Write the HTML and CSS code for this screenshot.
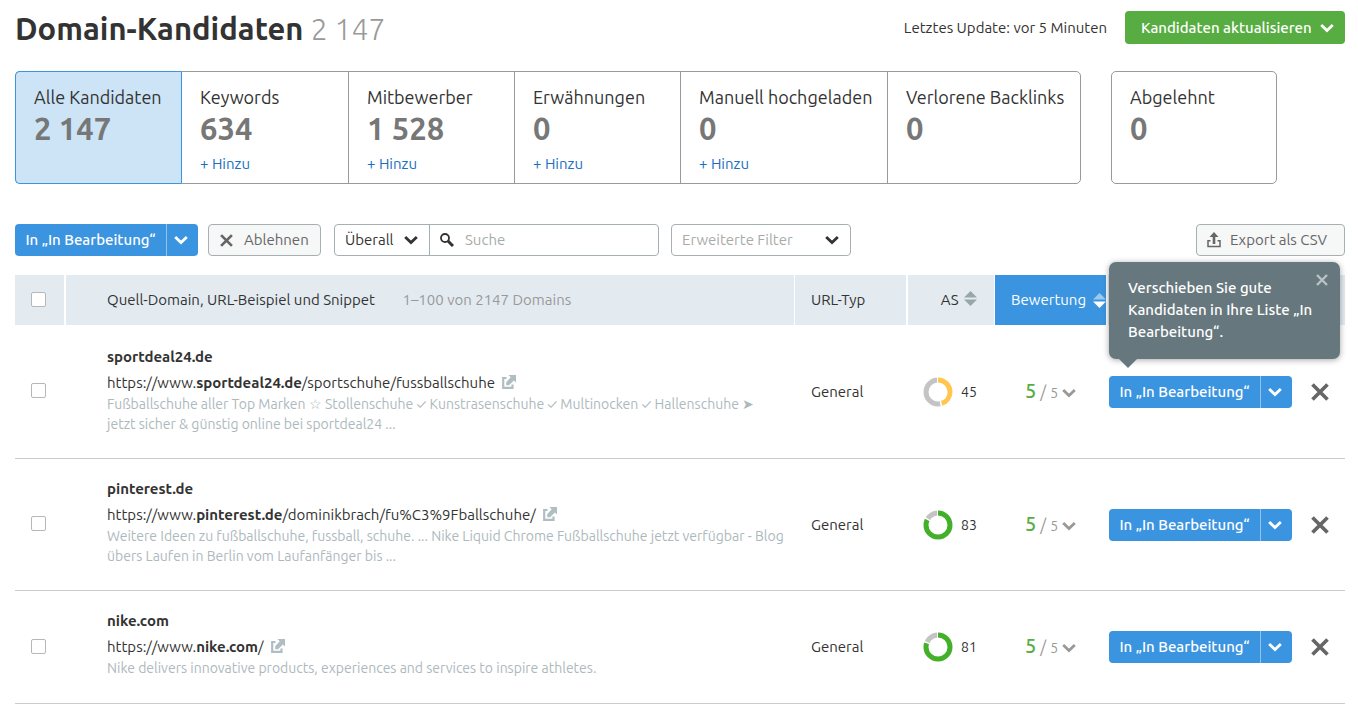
FILE: index.html
```html
<!DOCTYPE html>
<html lang="de">
<head>
<meta charset="utf-8">
<title>Domain-Kandidaten</title>
<meta name="viewport" content="width=device-width, initial-scale=1">
<link rel="stylesheet" href="styles.css">
</head>
<body>
<svg class="sprite" aria-hidden="true">
  <symbol id="chevron" viewBox="0 0 14 10"><path d="M1.200 2 7 7.600 12.800 2" fill="none" stroke="currentColor" stroke-width="2.800"/></symbol>
  <symbol id="cross" viewBox="0 0 18 18"><path d="M1.500 1.500 16.500 16.500M16.500 1.500 1.500 16.500" fill="none" stroke="currentColor" stroke-width="3.700"/></symbol>
  <symbol id="search" viewBox="0 0 14 14"><circle cx="5" cy="5" r="4" fill="none" stroke="currentColor" stroke-width="1.800"/><path d="M8 8 13 13" fill="none" stroke="currentColor" stroke-width="3"/></symbol>
  <symbol id="export" viewBox="0 0 14 16"><path d="M3.500 8.700H1V14.500H13V8.700H10.500" fill="none" stroke="currentColor" stroke-width="1.500"/><path d="M7 0 11.500 5H8.300V12H5.700V5H2.500Z" fill="currentColor"/></symbol>
  <symbol id="external" viewBox="0 0 14 14"><path d="M4.500 3H1.200V12.800H10.500V9.500" fill="none" stroke="currentColor" stroke-width="2.200"/><path d="M6.500 0H14V7.500L11.900 5.400 7 10.300H4.200V7.200L8.700 2.300Z" fill="currentColor"/></symbol>
</svg>

<header class="page-head">
  <h1 class="title">Domain-Kandidaten <span class="title-count">2 147</span></h1>
  <span class="updated">Letztes Update: vor 5 Minuten</span>
  <button class="btn btn-green" type="button">Kandidaten aktualisieren <svg class="chevron"><use href="#chevron"/></svg></button>
</header>

<nav class="cards">
  <div class="card-group">
    <div class="card card-active"><span class="card-label">Alle Kandidaten</span><span class="card-value">2 147</span></div>
    <div class="card"><span class="card-label">Keywords</span><span class="card-value">634</span><a class="card-link" href="#">+ Hinzu</a></div>
    <div class="card"><span class="card-label">Mitbewerber</span><span class="card-value">1 528</span><a class="card-link" href="#">+ Hinzu</a></div>
    <div class="card"><span class="card-label">Erwähnungen</span><span class="card-value">0</span><a class="card-link" href="#">+ Hinzu</a></div>
    <div class="card"><span class="card-label">Manuell hochgeladen</span><span class="card-value">0</span><a class="card-link" href="#">+ Hinzu</a></div>
    <div class="card"><span class="card-label">Verlorene Backlinks</span><span class="card-value">0</span></div>
  </div>
  <div class="card card-single"><span class="card-label">Abgelehnt</span><span class="card-value">0</span></div>
</nav>

<div class="toolbar">
  <div class="split">
    <button class="btn btn-blue split-main" type="button">In „In Bearbeitung“</button>
    <button class="btn btn-blue split-more" type="button" aria-label="Weitere Optionen"><svg class="chevron"><use href="#chevron"/></svg></button>
  </div>
  <button class="btn btn-plain btn-reject" type="button"><svg class="cross-small"><use href="#cross"/></svg>Ablehnen</button>
  <div class="search">
    <label class="scope"><select class="scope-select" aria-label="Suchbereich"><option>Überall</option></select><svg class="chevron"><use href="#chevron"/></svg></label>
    <label class="search-box"><svg class="icon-search"><use href="#search"/></svg><input class="search-input" type="text" placeholder="Suche" aria-label="Suche"></label>
  </div>
  <button class="btn btn-filter" type="button"><span>Erweiterte Filter</span><svg class="chevron"><use href="#chevron"/></svg></button>
  <button class="btn btn-plain btn-export" type="button"><svg class="icon-export"><use href="#export"/></svg>Export als CSV</button>
</div>

<table class="domains">
  <colgroup><col class="col-check"><col><col class="col-type"><col class="col-score"><col class="col-rating"><col class="col-action"></colgroup>
  <thead>
    <tr>
      <th class="cell-check"><input class="check" type="checkbox" aria-label="Alle auswählen"></th>
      <th class="cell-source">Quell-Domain, URL-Beispiel und Snippet <span class="range">1–100 von 2147 Domains</span></th>
      <th class="cell-type">URL-Typ</th>
      <th class="cell-as">AS <svg class="sort" viewBox="0 0 13 15"><path d="M6.500 0 13 6.500H0ZM0 8.500H13L6.500 15Z" fill="#97a6a9"/></svg></th>
      <th class="cell-sorted"><span class="sorted-row"><span class="sorted-text">Bewertung</span><svg class="sort" viewBox="0 0 13 15"><path d="M6.500 0 13 6.500H0Z" fill="#9ccaee"/><path d="M0 8.500H13L6.500 15Z" fill="#fff"/></svg></span></th>
      <th></th>
    </tr>
  </thead>
  <tbody>
    <tr>
      <td class="cell-check"><input class="check" type="checkbox" aria-label="sportdeal24.de auswählen"></td>
      <td class="cell-source">
        <div class="domain">sportdeal24.de</div>
        <a class="url" href="#">https://www.<b>sportdeal24.de</b>/sportschuhe/fussballschuhe<svg class="external"><use href="#external"/></svg></a>
        <p class="snippet">Fußballschuhe aller Top Marken ☆ Stollenschuhe ✓ Kunstrasenschuhe ✓ Multinocken ✓ Hallenschuhe ➤<br>jetzt sicher &amp; günstig online bei sportdeal24 ...</p>
      </td>
      <td class="cell-type">General</td>
      <td><div class="score"><svg class="ring" viewBox="0 0 30 30"><circle class="ring-base" cx="15" cy="15" r="12" pathLength="100"/><circle class="ring-gap" cx="15" cy="15" r="12" pathLength="100" stroke-dasharray="47 53"/><circle class="ring-yellow" cx="15" cy="15" r="12" pathLength="100" stroke-dasharray="45 55"/><path class="ring-start" d="M23 14.500H30"/></svg>45</div></td>
      <td><button class="rating" type="button"><span class="rating-value">5</span><span class="rating-slash">/</span><span class="rating-max">5</span><svg class="chevron"><use href="#chevron"/></svg></button></td>
      <td><div class="actions">
        <div class="split">
          <button class="btn btn-blue split-main" type="button">In „In Bearbeitung“</button>
          <button class="btn btn-blue split-more" type="button" aria-label="Weitere Optionen"><svg class="chevron"><use href="#chevron"/></svg></button>
        </div>
        <button class="remove" type="button" aria-label="Ablehnen"><svg class="cross"><use href="#cross"/></svg></button>
        <div class="tip" role="tooltip">Verschieben Sie gute<br>Kandidaten in Ihre Liste „In<br>Bearbeitung“.<button class="tip-close" type="button" aria-label="Schließen"><svg class="cross-tip"><use href="#cross"/></svg></button></div>
      </div></td>
    </tr>
    <tr>
      <td class="cell-check"><input class="check" type="checkbox" aria-label="pinterest.de auswählen"></td>
      <td class="cell-source">
        <div class="domain">pinterest.de</div>
        <a class="url" href="#">https://www.<b>pinterest.de</b>/dominikbrach/fu%C3%9Fballschuhe/<svg class="external"><use href="#external"/></svg></a>
        <p class="snippet">Weitere Ideen zu fußballschuhe, fussball, schuhe. ... Nike Liquid Chrome Fußballschuhe jetzt verfügbar - Blog übers Laufen in Berlin vom Laufanfänger bis ...</p>
      </td>
      <td class="cell-type">General</td>
      <td><div class="score"><svg class="ring" viewBox="0 0 30 30"><circle class="ring-base" cx="15" cy="15" r="12" pathLength="100"/><circle class="ring-gap" cx="15" cy="15" r="12" pathLength="100" stroke-dasharray="84 16"/><circle class="ring-green" cx="15" cy="15" r="12" pathLength="100" stroke-dasharray="82 18"/><path class="ring-start" d="M23 14.500H30"/></svg>83</div></td>
      <td><button class="rating" type="button"><span class="rating-value">5</span><span class="rating-slash">/</span><span class="rating-max">5</span><svg class="chevron"><use href="#chevron"/></svg></button></td>
      <td><div class="actions">
        <div class="split">
          <button class="btn btn-blue split-main" type="button">In „In Bearbeitung“</button>
          <button class="btn btn-blue split-more" type="button" aria-label="Weitere Optionen"><svg class="chevron"><use href="#chevron"/></svg></button>
        </div>
        <button class="remove" type="button" aria-label="Ablehnen"><svg class="cross"><use href="#cross"/></svg></button>
      </div></td>
    </tr>
    <tr>
      <td class="cell-check"><input class="check" type="checkbox" aria-label="nike.com auswählen"></td>
      <td class="cell-source">
        <div class="domain">nike.com</div>
        <a class="url" href="#">https://www.<b>nike.com</b>/<svg class="external"><use href="#external"/></svg></a>
        <p class="snippet">Nike delivers innovative products, experiences and services to inspire athletes.</p>
      </td>
      <td class="cell-type">General</td>
      <td><div class="score"><svg class="ring" viewBox="0 0 30 30"><circle class="ring-base" cx="15" cy="15" r="12" pathLength="100"/><circle class="ring-gap" cx="15" cy="15" r="12" pathLength="100" stroke-dasharray="82 18"/><circle class="ring-green" cx="15" cy="15" r="12" pathLength="100" stroke-dasharray="80 20"/><path class="ring-start" d="M23 14.500H30"/></svg>81</div></td>
      <td><button class="rating" type="button"><span class="rating-value">5</span><span class="rating-slash">/</span><span class="rating-max">5</span><svg class="chevron"><use href="#chevron"/></svg></button></td>
      <td><div class="actions">
        <div class="split">
          <button class="btn btn-blue split-main" type="button">In „In Bearbeitung“</button>
          <button class="btn btn-blue split-more" type="button" aria-label="Weitere Optionen"><svg class="chevron"><use href="#chevron"/></svg></button>
        </div>
        <button class="remove" type="button" aria-label="Ablehnen"><svg class="cross"><use href="#cross"/></svg></button>
      </div></td>
    </tr>
  </tbody>
</table>
</body>
</html>
```
FILE: styles.css
```css
* { box-sizing: border-box; }

body {
  margin: 0;
  padding: 11px 13px 0 15px;
  background: #fff;
  color: #333;
  font: 15px/20px Ubuntu, "Open Sans", "Noto Sans", sans-serif;
}

button, input, select { font: inherit; color: inherit; }
button { border: 0; background: none; cursor: pointer; padding: 0; }
a { text-decoration: none; }
svg { flex: none; }

.sprite { display: none; }
.chevron { width: 14px; height: 10px; }
.cross { width: 18px; height: 18px; }
.cross-small { width: 13px; height: 13px; }
.cross-tip { width: 12px; height: 12px; }

/* Page head */
.page-head { display: flex; align-items: center; height: 33px; }
.title { flex: 1; margin: 0; padding-top: 2px; font-size: 31px; line-height: 36px; font-weight: 600; }
.title-count { color: #999; font-size: 30px; font-weight: 300; }
.updated { margin-right: 18px; }

/* Buttons */
.btn { display: flex; align-items: center; height: 32px; border-radius: 4px; white-space: nowrap; }
.btn-green { height: 33px; width: 220px; justify-content: space-between; padding: 0 11px 0 16px; background: #57ad41; color: #fff; font-weight: 500; }
.btn-blue { background: #3b94df; color: #fff; font-weight: 500; }
.btn-plain { border: 1px solid #a6b0b3; background: #f6f7f7; color: #666; }
.split { display: flex; }
.split-main { width: 151px; justify-content: center; border-radius: 4px 0 0 4px; }
.split-more { width: 32px; justify-content: center; padding-right: 3px; border-left: 1px solid #93c3ec; border-radius: 0 4px 4px 0; }

/* Summary cards */
.cards { display: flex; gap: 30px; margin-top: 27px; }
.card-group { display: grid; grid-template-columns: 165px 167px 166px 166px 207px 193px; border: 1px solid #979a9a; border-radius: 5px; }
.card { display: flex; flex-direction: column; height: 111px; padding: 13px 0 0 18px; border-left: 1px solid #979a9a; white-space: nowrap; }
.card-active { height: 113px; margin: -1px 0 -1px -1px; border: 1px solid #3b94df; border-right: 0; border-radius: 5px 0 0 5px; background: #cce4f6; }
.card-active + .card { border-left-color: #3b94df; }
.card-single { width: 166px; height: 113px; border: 1px solid #979a9a; border-radius: 5px; }
.card-label { font-size: 18px; line-height: 24px; }
.card-value { font-size: 31px; line-height: 40px; font-weight: 600; color: #777; }
.card-link { margin-top: 5px; color: #1a6fc0; }

/* Toolbar */
.toolbar { display: flex; margin-top: 40px; }
.btn-reject { gap: 11px; width: 113px; margin-left: 10px; padding-left: 11px; }
.search { display: flex; width: 325px; height: 32px; margin-left: 13px; border: 1px solid #a6b0b3; border-radius: 4px; }
.scope { display: grid; grid-template-columns: 1fr 14px; align-items: center; width: 95px; padding: 0 11px 0 10px; border-right: 1px solid #a6b0b3; }
.scope-select { width: 100%; padding: 0; border: 0; outline: 0; background: none; appearance: none; }
.search-box { display: flex; flex: 1; align-items: center; gap: 11px; min-width: 0; padding: 0 10px; }
.icon-search { width: 14px; height: 14px; color: #333; }
.search-input { flex: 1; min-width: 0; padding: 0; border: 0; outline: 0; background: none; }
.search-input::placeholder { color: #aaa; opacity: 1; }
.btn-filter { justify-content: space-between; width: 180px; margin-left: 12px; padding: 0 11px 0 10px; border: 1px solid #a6b0b3; color: #aaa; }
.btn-filter .chevron { color: #333; }
.btn-export { gap: 9px; width: 149px; margin-left: auto; padding-left: 10px; }
.icon-export { width: 14px; height: 16px; }

/* Table */
.domains { width: 100%; margin-top: 19px; border-collapse: separate; border-spacing: 0; table-layout: fixed; }
.col-check { width: 51px; }
.col-type { width: 113px; }
.col-score { width: 87px; }
.col-rating { width: 113px; }
.col-action { width: 237px; }
.domains th { height: 50px; padding: 0; background: #e3ebf1; border-right: 2px solid #fff; font-weight: 400; text-align: left; }
.domains th:last-child { border-right: 0; }
.domains td { padding: 0; border-bottom: 1px solid #ccc; }
.domains .cell-check { padding: 0 0 2px 16px; }
.check { display: block; width: 15px; height: 15px; margin: 0; appearance: none; border: 1px solid #b7b7b7; border-radius: 2px; background: #fff; }
.domains .cell-source { padding: 20px 8px 24px 41px; }
.domains tbody tr:first-child .cell-source { padding-top: 22px; }
.domains tbody tr:last-child .cell-source { padding-bottom: 25px; }
.domains th.cell-source { padding-top: 0; padding-bottom: 0; border-right-width: 1px; }
.domains .cell-type { padding-left: 16px; }
.domains .cell-as { padding-right: 17px; border-right-width: 1px; text-align: right; }
.domains .cell-sorted { background: #3b94df; color: #fff; }
.range { margin-left: 24px; color: #999; }
.sort { width: 13px; height: 15px; margin-left: 2px; vertical-align: -1px; }
.sorted-row { display: flex; align-items: center; padding-left: 16px; overflow: hidden; }
.sorted-text { width: 80px; }

.domain { font-weight: 700; }
.url { display: flex; align-items: center; margin-top: 6px; color: #333; }
.url b { font-weight: 700; }
.external { width: 14px; height: 14px; margin: 0 0 2px 7px; color: #b0bec1; }
.snippet { margin: 1px 0 0; font-size: 14px; color: #adb9bd; }

.score { display: flex; align-items: center; gap: 8px; padding-left: 15px; font-size: 14px; }
.ring { width: 30px; height: 30px; transform: rotate(-90deg); }
.ring circle { fill: none; stroke-width: 5; }
.ring .ring-base { stroke: #c4c4c4; }
.ring .ring-gap { stroke: #fff; stroke-width: 6; }
.ring .ring-yellow { stroke: #ffc74f; }
.ring .ring-green { stroke: #43b02a; }
.ring-start { stroke: #fff; stroke-width: 1; }

.rating { display: flex; align-items: baseline; gap: 4px; padding-left: 30px; color: #999; font-size: 14px; }
.rating-value { font-size: 20px; font-weight: 500; color: #57ad41; }
.rating-slash { font-size: 16px; }

.actions { position: relative; display: flex; align-items: center; padding-left: 1px; }
.remove { display: flex; margin-left: 19px; color: #666; }

/* Tooltip above the first action */
.tip { position: absolute; left: 1px; bottom: 49px; width: 231px; padding: 15px 19px 16px; border-radius: 7px; background: #66787e; color: #fff; font-weight: 500; line-height: 22px; white-space: nowrap; box-shadow: 0 1px 6px rgba(0, 0, 0, .35); }
.tip::after { content: ""; position: absolute; left: 10px; top: 100%; border: 9px solid transparent; border-top-color: #66787e; border-bottom: 0; }
.tip-close { position: absolute; top: 12px; right: 12px; display: flex; color: #b9c2c5; }
```
